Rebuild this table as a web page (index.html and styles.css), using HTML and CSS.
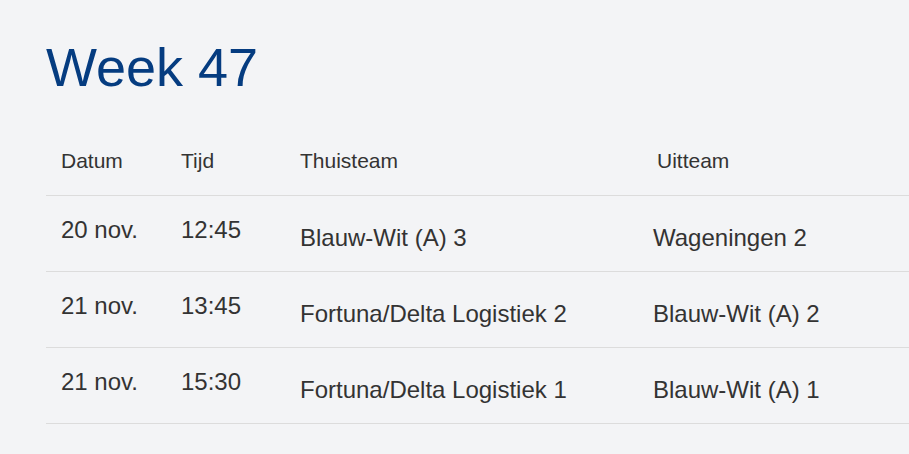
FILE: index.html
```html
<!DOCTYPE html>
<html lang="nl">
<head>
<meta charset="utf-8">
<title>Week 47</title>
<link rel="stylesheet" href="styles.css">
</head>
<body>
<main class="page">
  <h1 class="week-title">Week 47</h1>
  <table class="schedule">
    <colgroup>
      <col class="col-date">
      <col class="col-time">
      <col class="col-home">
      <col class="col-away">
    </colgroup>
    <thead>
      <tr>
        <th>Datum</th>
        <th>Tijd</th>
        <th>Thuisteam</th>
        <th class="away">Uitteam</th>
      </tr>
    </thead>
    <tbody>
      <tr>
        <td class="when">20 nov.</td>
        <td class="when">12:45</td>
        <td class="team">Blauw-Wit (A) 3</td>
        <td class="team away">Wageningen 2</td>
      </tr>
      <tr>
        <td class="when">21 nov.</td>
        <td class="when">13:45</td>
        <td class="team">Fortuna/Delta Logistiek 2</td>
        <td class="team away">Blauw-Wit (A) 2</td>
      </tr>
      <tr>
        <td class="when">21 nov.</td>
        <td class="when">15:30</td>
        <td class="team">Fortuna/Delta Logistiek 1</td>
        <td class="team away">Blauw-Wit (A) 1</td>
      </tr>
    </tbody>
  </table>
</main>
</body>
</html>
```

FILE: styles.css
```css
html, body {
  margin: 0;
  padding: 0;
  background: #f3f4f6;
}

body {
  font-family: "Liberation Sans", Arial, sans-serif;
  color: #333333;
}

.page {
  padding: 36px 0 0 46px;
}

.week-title {
  margin: 0 0 36px 0;
  font-size: 54px;
  font-weight: 400;
  line-height: 62px;
  color: #053c80;
}

.schedule {
  width: 100%;
  border-collapse: collapse;
  table-layout: fixed;
}

.col-date { width: 120px; }
.col-time { width: 119px; }
.col-home { width: 355px; }

.schedule th {
  text-align: left;
  font-weight: 400;
  font-size: 21px;
  line-height: 24px;
  padding: 15px 15px 22px 15px;
  border-bottom: 1px solid #dcdcdc;
}

.schedule th.away {
  padding-left: 17px;
}

.schedule td {
  font-size: 24px;
  line-height: 28px;
  vertical-align: top;
  border-bottom: 1px solid #dcdcdc;
}

.schedule td.when {
  padding: 20px 15px 0 15px;
}

.schedule td.team {
  padding: 28px 15px 19px 15px;
}

.schedule td.team.away {
  padding-left: 13px;
}
```
